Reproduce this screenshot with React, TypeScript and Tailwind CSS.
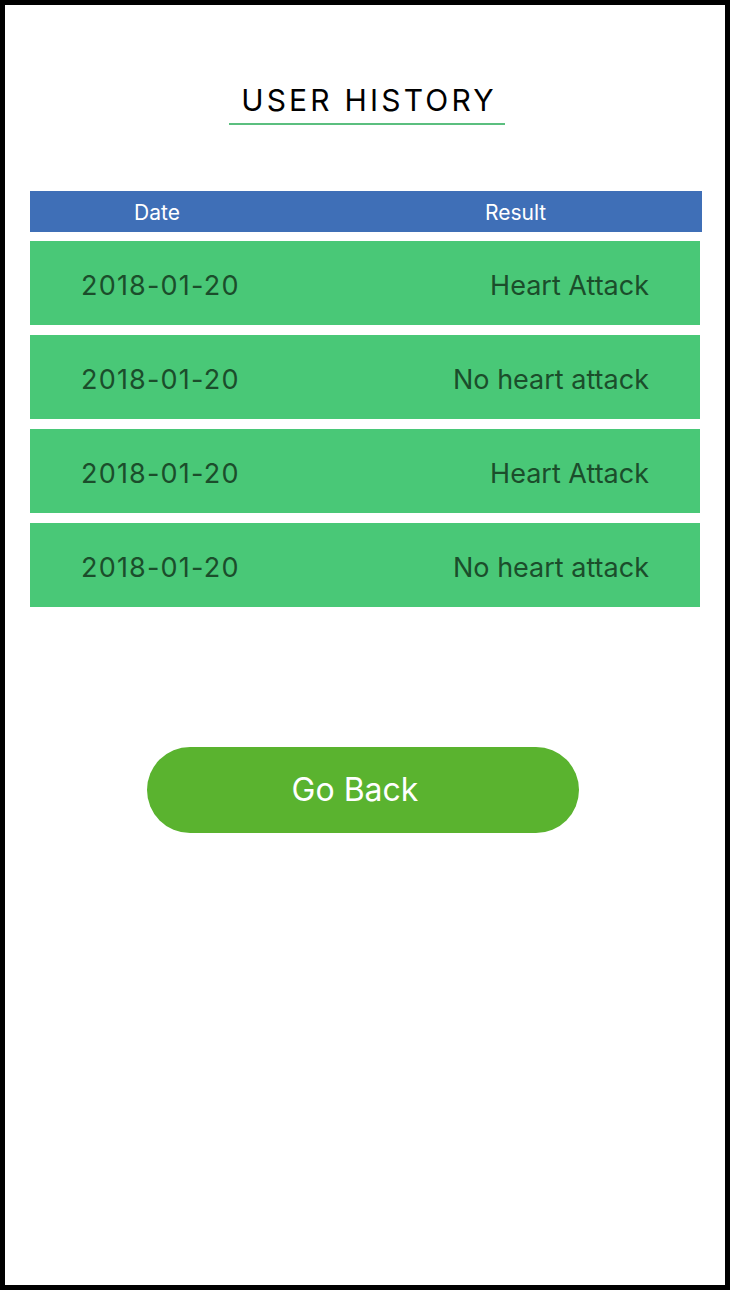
const rows = [
  { date: "2018-01-20", result: "Heart Attack" },
  { date: "2018-01-20", result: "No heart attack" },
  { date: "2018-01-20", result: "Heart Attack" },
  { date: "2018-01-20", result: "No heart attack" },
];

export default function App() {
  return (
    <div className="h-[1290px] w-[730px] border-[5px] border-black bg-white font-['Inter',sans-serif]">
      <div className="flex justify-center pt-[76px] pl-[4px]">
        <h1 className="border-b-2 border-[#5bbf7f] pr-[8px] pl-[12px] pb-[4px] text-[30px] leading-[38px] font-normal tracking-[3.2px] text-black">
          USER HISTORY
        </h1>
      </div>

      <div className="mt-[66px] pl-[25px]">
        <div className="flex h-[41px] items-center w-[672px] bg-[#3f6fb7] pt-[2px] text-[21px] text-white">
          <div className="w-[254px] text-center">Date</div>
          <div className="flex-1 pl-[201px]">Result</div>
        </div>
        <div className="mt-[9px] flex w-[670px] flex-col gap-[10px]">
          {rows.map((r, i) => (
            <div key={i} className="flex h-[84px] items-center justify-between bg-[#49c877] px-[51px] pt-[6px] text-[27px] text-[#1b4d2b]">
              <span className="tracking-[1.2px]">{r.date}</span>
              <span>{r.result}</span>
            </div>
          ))}
        </div>
      </div>

      <div className="mt-[140px] flex justify-center pr-[4px]">
        <button className="h-[86px] w-[432px] rounded-full bg-[#5ab32f] pr-[16px] text-[32px] text-white">Go Back</button>
      </div>
    </div>
  );
}
